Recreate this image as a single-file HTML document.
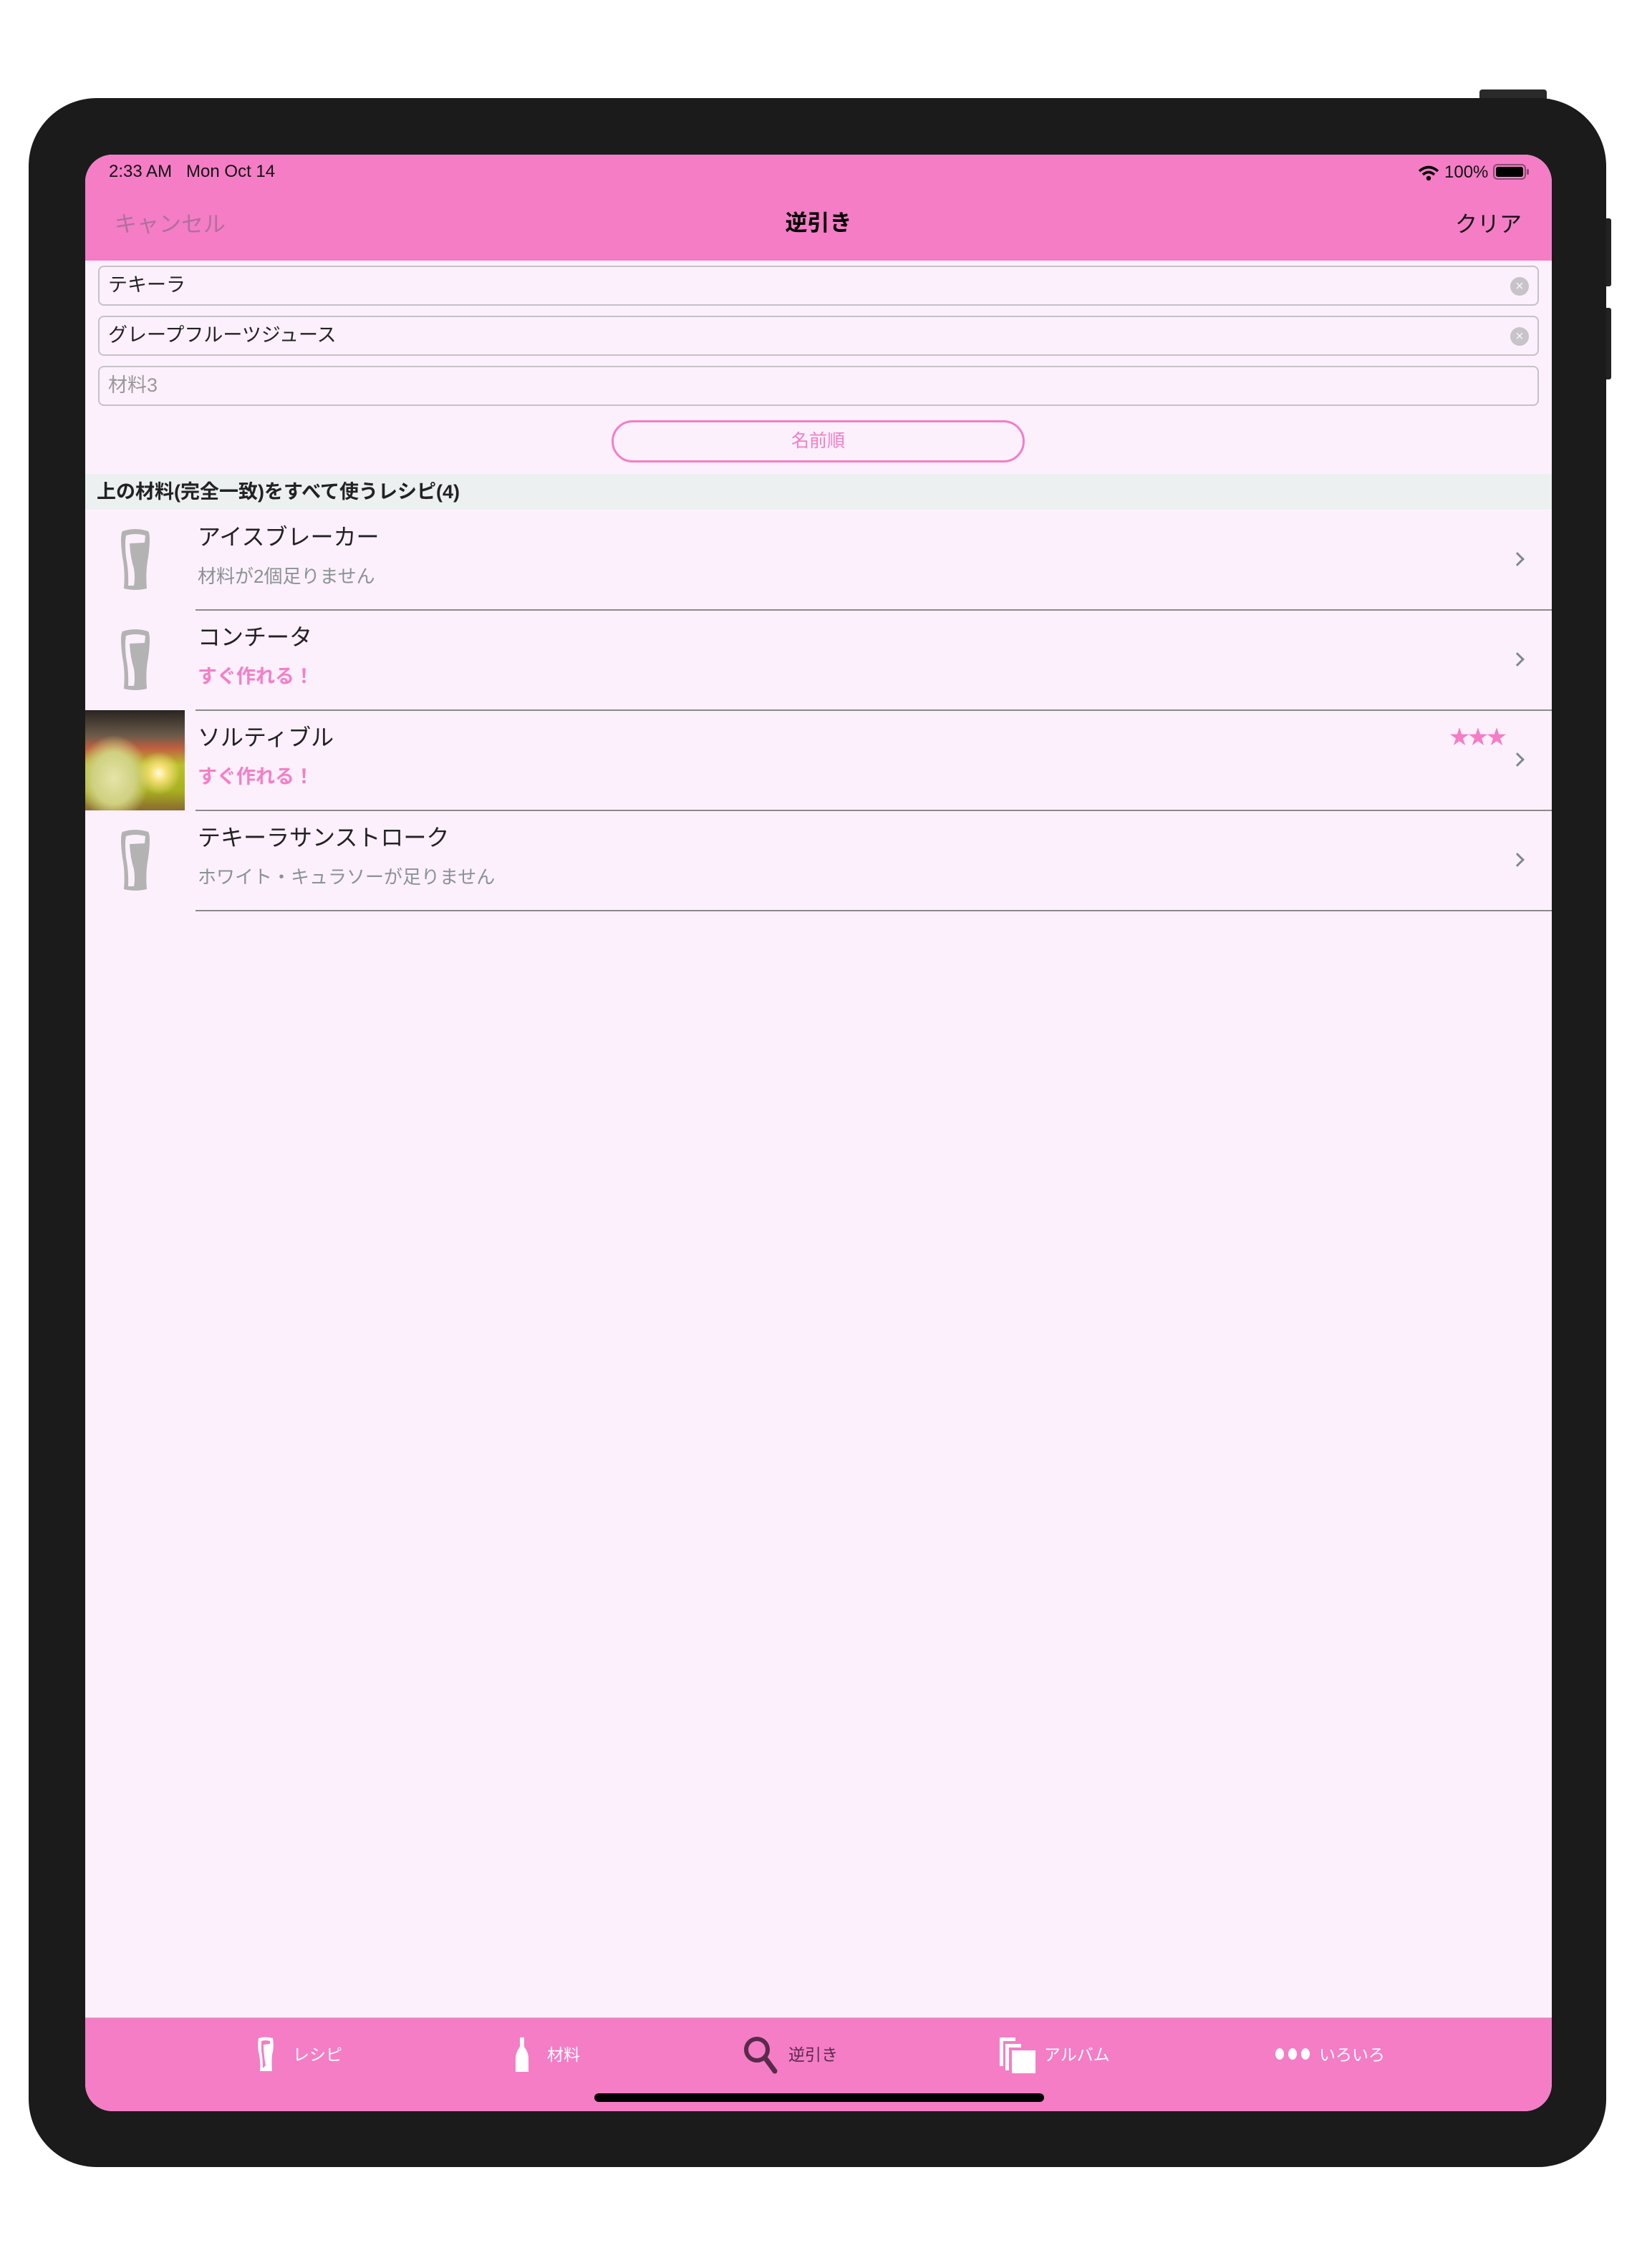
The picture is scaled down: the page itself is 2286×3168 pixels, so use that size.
<!DOCTYPE html>
<html><head><meta charset="utf-8"><style>
*{margin:0;padding:0;box-sizing:border-box}
body{width:2286px;height:3168px;background:#fff;position:relative;overflow:hidden;font-family:"Liberation Sans","Noto Sans CJK JP",sans-serif}
.abs{position:absolute}
#dev{left:40px;top:137px;width:2203px;height:2890px;background:#1b1b1b;border-radius:95px}
#scr{left:119px;top:216px;width:2048px;height:2733px;background:#fdf0fd;border-radius:38px;overflow:hidden}
.t{position:absolute;white-space:nowrap;line-height:1}
.field{position:absolute;left:18px;width:2012px;height:56px;border:2px solid #c4c2c8;border-radius:8px;background:#fdf0fd}
.clr{position:absolute;right:12px;top:14px;width:26px;height:26px;border-radius:50%;background:#c6c3c9;color:#fdf0fd;font-size:20px;line-height:26px;text-align:center}
.sep{position:absolute;left:154px;right:0;height:2px;background:#8a8a8a}
.chev{position:absolute;left:1993px;width:14px;height:14px;border-right:3px solid #7d8a8a;border-top:3px solid #7d8a8a;transform:rotate(45deg)}
.ttl{font-size:32px;color:#222}
.sub{font-size:26px;color:#8a9393}
.pk{font-size:27px;color:#f47fc6;font-weight:bold}
.tab{font-size:23px;color:#fff}
</style></head><body>
<div class="abs" style="left:2066px;top:125px;width:94px;height:16px;background:#2a2a2a;border-radius:4px"></div>
<div class="abs" style="left:2236px;top:305px;width:14px;height:95px;background:#222;border-radius:3px"></div>
<div class="abs" style="left:2236px;top:430px;width:14px;height:100px;background:#222;border-radius:3px"></div>
<div id="dev" class="abs"></div>
<div id="scr" class="abs">
 <div class="abs" style="left:0;top:0;width:2048px;height:148px;background:#f47dc6"></div>
 <div class="t" style="left:33px;top:12px;font-size:24px;color:#111">2:33 AM&nbsp;&nbsp;&nbsp;Mon Oct 14</div>
 <svg class="abs" style="left:1861px;top:15px" width="30" height="22" viewBox="0 0 30 22"><path d="M2 8 Q15 -3 28 8" stroke="#000" stroke-width="3.5" fill="none"/><path d="M7 13 Q15 6 23 13" stroke="#000" stroke-width="3.5" fill="none"/><circle cx="15" cy="18" r="3.2" fill="#000"/></svg>
 <div class="t" style="left:1898px;top:13px;font-size:24px;color:#111">100%</div>
 <div class="abs" style="left:1966px;top:13px;width:46px;height:22px;border:2px solid #8a4a74;border-radius:6px;padding:2px"><div style="width:100%;height:100%;background:#000;border-radius:3px"></div></div>
 <div class="abs" style="left:2013px;top:20px;width:3px;height:8px;background:#8a4a74;border-radius:2px"></div>
 <div class="t" style="left:41px;top:82px;font-size:31px;color:#b0709a">キャンセル</div>
 <div class="t" style="left:0;width:2048px;text-align:center;top:80px;font-size:31px;color:#000;font-weight:bold">逆引き</div>
 <div class="t" style="right:42px;top:82px;font-size:31px;color:#111">クリア</div>

 <div class="field" style="top:155px"><div class="t" style="left:12px;top:12px;font-size:27px;color:#222">テキーラ</div><div class="clr">×</div></div>
 <div class="field" style="top:225px"><div class="t" style="left:12px;top:12px;font-size:27px;color:#222">グレープフルーツジュース</div><div class="clr">×</div></div>
 <div class="field" style="top:295px"><div class="t" style="left:12px;top:12px;font-size:27px;color:#999">材料3</div></div>
 <div class="abs" style="left:735px;top:371px;width:577px;height:59px;border:3px solid #f47dc6;border-radius:30px;background:#fdf0fd"><div class="t" style="left:0;width:100%;text-align:center;top:14px;font-size:25px;color:#f47dc6">名前順</div></div>

 <div class="abs" style="left:0;top:446px;width:2048px;height:50px;background:#ecf0f1"></div>
 <div class="t" style="left:16px;top:458px;font-size:27px;color:#222;font-weight:bold">上の材料(完全一致)をすべて使うレシピ(4)</div>

 <svg class="abs" style="left:48px;top:522px" width="44" height="88" viewBox="0 0 44 88"><path d="M4 4 Q22 -2 40 4 Q44 10 40 40 Q36 60 38 84 Q22 88 6 84 Q8 60 4 40 Q0 10 4 4Z" fill="#b3b3b3"/><path d="M9 10 Q22 6 36 10 L35 20 L14 21 Q15 40 20 56 Q22 70 20 80 L12 80 Q13 60 9 40 Q7 20 9 10Z" fill="#fdf0fd"/></svg>
 <div class="t ttl" style="left:157px;top:518px">アイスブレーカー</div>
 <div class="t sub" style="left:157px;top:576px">材料が2個足りません</div>
 <div class="chev" style="top:558px"></div>
 <div class="sep" style="top:635px"></div>

 <svg class="abs" style="left:48px;top:662px" width="44" height="88" viewBox="0 0 44 88"><path d="M4 4 Q22 -2 40 4 Q44 10 40 40 Q36 60 38 84 Q22 88 6 84 Q8 60 4 40 Q0 10 4 4Z" fill="#b3b3b3"/><path d="M9 10 Q22 6 36 10 L35 20 L14 21 Q15 40 20 56 Q22 70 20 80 L12 80 Q13 60 9 40 Q7 20 9 10Z" fill="#fdf0fd"/></svg>
 <div class="t ttl" style="left:157px;top:658px">コンチータ</div>
 <div class="t pk" style="left:157px;top:716px">すぐ作れる！</div>
 <div class="chev" style="top:698px"></div>
 <div class="sep" style="top:775px"></div>

 <div class="abs" style="left:0;top:776px;width:139px;height:140px;background:
  radial-gradient(circle at 103px 88px,#fffde0 0,#f7e27a 10px,rgba(180,190,40,0) 30px),
  radial-gradient(ellipse 50px 60px at 40px 95px,#e6e4a8 0,#cfd080 60%,rgba(0,0,0,0) 100%),
  linear-gradient(180deg,#2a2420 0,#6a5a4a 25%,#c06040 38%,#b8c228 55%,#a8b020 80%,#8a6a30 100%)"></div>
 <div class="t ttl" style="left:157px;top:798px">ソルティブル</div>
 <div class="t pk" style="left:157px;top:856px">すぐ作れる！</div>
 <div class="t" style="left:1905px;top:800px;font-size:28px;color:#f47dc6;letter-spacing:-2px">★★★</div>
 <div class="chev" style="top:838px"></div>
 <div class="sep" style="top:915px"></div>

 <svg class="abs" style="left:48px;top:942px" width="44" height="88" viewBox="0 0 44 88"><path d="M4 4 Q22 -2 40 4 Q44 10 40 40 Q36 60 38 84 Q22 88 6 84 Q8 60 4 40 Q0 10 4 4Z" fill="#b3b3b3"/><path d="M9 10 Q22 6 36 10 L35 20 L14 21 Q15 40 20 56 Q22 70 20 80 L12 80 Q13 60 9 40 Q7 20 9 10Z" fill="#fdf0fd"/></svg>
 <div class="t ttl" style="left:157px;top:938px">テキーラサンストローク</div>
 <div class="t sub" style="left:157px;top:996px">ホワイト・キュラソーが足りません</div>
 <div class="chev" style="top:978px"></div>
 <div class="sep" style="top:1055px"></div>

 <div class="abs" style="left:0;top:2602px;width:2048px;height:131px;background:#f47dc6;border-top:1px solid #c8b8c0"></div>
 <svg class="abs" style="left:240px;top:2629px" width="24" height="50" viewBox="0 0 24 50"><path d="M2 2 Q12 -1 22 2 Q24 15 21 25 Q20 38 21 48 L4 48 Q5 38 3 25 Q0 15 2 2Z" fill="#fff"/><path d="M6 6 Q12 4 18 6 L18 10 L9 11 Q9 25 12 40 L8 44 Q8 30 6 20Z" fill="#f47dc6"/></svg>
 <div class="t tab" style="left:290px;top:2643px">レシピ</div>
 <svg class="abs" style="left:600px;top:2629px" width="20" height="50" viewBox="0 0 20 50"><path d="M7 1 L13 1 L13 14 Q19 22 19 30 L19 49 L1 49 L1 30 Q1 22 7 14Z" fill="#fff"/></svg>
 <div class="t tab" style="left:645px;top:2643px">材料</div>
 <svg class="abs" style="left:918px;top:2627px" width="50" height="54" viewBox="0 0 50 54"><circle cx="20" cy="20" r="15" stroke="#5a2a4a" stroke-width="6" fill="none"/><path d="M31 31 L45 50" stroke="#5a2a4a" stroke-width="7" stroke-linecap="round"/></svg>
 <div class="t tab" style="left:982px;top:2643px;color:#5a2a4a">逆引き</div>
 <svg class="abs" style="left:1277px;top:2630px" width="50" height="50" viewBox="0 0 50 50"><path d="M0 0 H22 V5 H5 V40 H0Z" fill="#fff"/><path d="M8 9 H30 V14 H13 V46 H8Z" fill="#fff"/><rect x="17" y="18" width="33" height="32" fill="#fff"/></svg>
 <div class="t tab" style="left:1339px;top:2643px">アルバム</div>
 <svg class="abs" style="left:1661px;top:2643px" width="52" height="20" viewBox="0 0 52 20"><ellipse cx="7" cy="10" rx="6" ry="8" fill="#fff"/><ellipse cx="25" cy="10" rx="6" ry="8" fill="#fff"/><ellipse cx="43" cy="10" rx="6" ry="8" fill="#fff"/></svg>
 <div class="t tab" style="left:1723px;top:2643px">いろいろ</div>
 <div class="abs" style="left:711px;top:2708px;width:628px;height:12px;background:#000;border-radius:6px"></div>
</div>
</body></html>
